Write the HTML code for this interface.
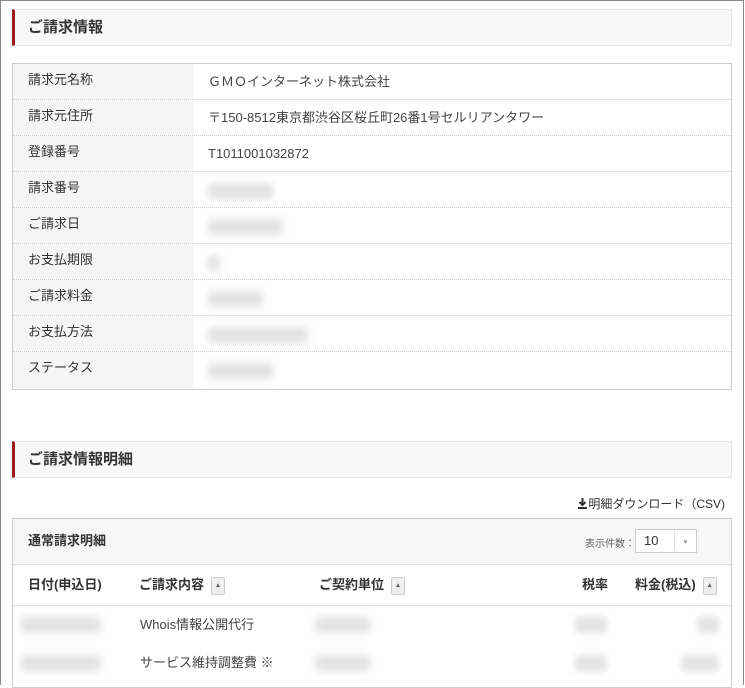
<!DOCTYPE html>
<html><head><meta charset="utf-8"><style>
*{box-sizing:border-box;margin:0;padding:0}
body{width:745px;height:685px;overflow:hidden;background:#fff;font-family:"Liberation Sans","Noto Sans CJK JP",sans-serif;color:#333;position:relative}
.frame{position:absolute;left:0;top:0;width:744px;height:685px;border:1px solid #888;border-bottom:none}
.hd{position:absolute;left:12px;width:720px;height:37px;background:#f8f8f8;border:1px solid #e6e6e6;border-left:3px solid #9e1b20;font-weight:bold;font-size:15px;line-height:35px;padding-left:13px;color:#333}
.tbl{position:absolute;left:12px;top:63px;width:720px;height:327px;border:1px solid #ccc}
.row{height:36px;border-bottom:1px dotted #ccc;display:flex;font-size:13px}
.row:last-child{border-bottom:none}
.lb{width:181px;background:#f5f5f5;padding-left:15px;line-height:32px}
.vl{padding-left:14px;line-height:36px;color:#444}
.bl{display:inline-block;background:#e2e2e2;filter:blur(4px);border-radius:4px;height:16px;vertical-align:middle}
.det{position:absolute;left:12px;top:518px;width:720px;height:170px;border:1px solid #ccc}
.sel{position:absolute;font-size:13px}
.sort{display:inline-block;width:14px;height:18px;border:1px solid #ccc;background:#eee;border-radius:2px;vertical-align:middle;margin-left:7px;font-size:7px;line-height:16px;text-align:center;color:#666}
</style></head><body>
<div class="frame"></div>
<div class="hd" style="top:9px">ご請求情報</div>
<div class="tbl">
<div class="row"><div class="lb">請求元名称</div><div class="vl">ＧＭＯインターネット株式会社</div></div>
<div class="row"><div class="lb">請求元住所</div><div class="vl">〒150-8512東京都渋谷区桜丘町26番1号セルリアンタワー</div></div>
<div class="row"><div class="lb">登録番号</div><div class="vl">T1011001032872</div></div>
<div class="row"><div class="lb">請求番号</div><div class="vl"><span class="bl" style="width:65px"></span></div></div>
<div class="row"><div class="lb">ご請求日</div><div class="vl"><span class="bl" style="width:75px"></span></div></div>
<div class="row"><div class="lb">お支払期限</div><div class="vl"><span class="bl" style="width:12px"></span></div></div>
<div class="row"><div class="lb">ご請求料金</div><div class="vl"><span class="bl" style="width:55px"></span></div></div>
<div class="row"><div class="lb">お支払方法</div><div class="vl"><span class="bl" style="width:100px"></span></div></div>
<div class="row"><div class="lb">ステータス</div><div class="vl"><span class="bl" style="width:65px"></span></div></div>
</div>
<div class="hd" style="top:441px">ご請求情報明細</div>
<div style="position:absolute;right:20px;top:495px;font-size:12px;color:#333"><svg width="11" height="12" viewBox="0 0 11 12" style="vertical-align:-1px"><path d="M5.5 1v7M2.5 5l3 3 3-3" stroke="#333" stroke-width="2" fill="none"/><rect x="1" y="10" width="9" height="2" fill="#333"/></svg>明細ダウンロード（CSV)</div>
<div class="det">
<div style="height:46px;background:#f7f7f7;border-bottom:1px solid #ddd;font-size:13px;font-weight:bold;line-height:44px;padding-left:15px">通常請求明細</div>
<div class="sel" style="left:572px;top:16px;font-size:10px;color:#666">表示件数：</div>
<div class="sel" style="left:622px;top:10px;width:62px;height:24px;border:1px solid #ccc;background:#fff;line-height:22px;padding-left:8px">10<span style="position:absolute;left:38px;top:2px;height:18px;border-left:1px solid #ddd;width:22px;text-align:center;font-size:7px;color:#888">▾</span></div>
<div style="height:41px;border-bottom:1px solid #ddd;font-size:13px;font-weight:bold;position:relative;line-height:40px">
<span style="position:absolute;left:15px">日付(申込日)</span>
<span style="position:absolute;left:126px">ご請求内容<span class="sort">▴</span></span>
<span style="position:absolute;left:306px">ご契約単位<span class="sort">▴</span></span>
<span style="position:absolute;left:569px">税率</span>
<span style="position:absolute;left:622px">料金(税込)<span class="sort">▴</span></span>
</div>
<div style="position:relative;height:38px;font-size:13px;line-height:38px;color:#444">
<span class="bl" style="position:absolute;left:8px;top:11px;width:80px"></span>
<span style="position:absolute;left:127px">Whois情報公開代行</span>
<span class="bl" style="position:absolute;left:302px;top:11px;width:55px"></span>
<span class="bl" style="position:absolute;left:562px;top:11px;width:32px"></span>
<span class="bl" style="position:absolute;left:684px;top:11px;width:22px"></span>
</div>
<div style="position:relative;height:38px;font-size:13px;line-height:38px;color:#444">
<span class="bl" style="position:absolute;left:8px;top:11px;width:80px"></span>
<span style="position:absolute;left:127px">サービス維持調整費 ※</span>
<span class="bl" style="position:absolute;left:302px;top:11px;width:55px"></span>
<span class="bl" style="position:absolute;left:562px;top:11px;width:32px"></span>
<span class="bl" style="position:absolute;left:668px;top:11px;width:38px"></span>
</div>
</div>
</body></html>
